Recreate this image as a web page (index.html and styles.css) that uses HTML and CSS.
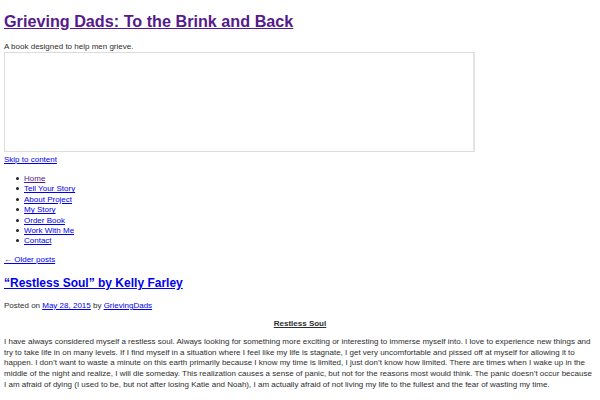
FILE: index.html
```html
<!DOCTYPE html>
<html lang="en">
<head>
<meta charset="utf-8">
<title>Grieving Dads: To the Brink and Back</title>
<link rel="stylesheet" href="styles.css">
</head>
<body>
<header class="site-header">
  <h1 class="site-title"><a class="visited" href="#">Grieving Dads: To the Brink and Back</a></h1>
  <p class="site-description">A book designed to help men grieve.</p>
  <div class="header-frame"></div>
  <a class="skip-link" href="#content">Skip to content</a>
  <ul class="menu">
    <li><a class="visited" href="#">Home</a></li>
    <li><a href="#">Tell Your Story</a></li>
    <li><a href="#">About Project</a></li>
    <li><a href="#">My Story</a></li>
    <li><a href="#">Order Book</a></li>
    <li><a href="#">Work With Me</a></li>
    <li><a href="#">Contact</a></li>
  </ul>
</header>
<main id="content" class="content">
  <div class="nav-above"><a href="#">&larr; Older posts</a></div>
  <article class="post">
    <h2 class="entry-title"><a href="#">&ldquo;Restless Soul&rdquo; by Kelly Farley</a></h2>
    <div class="entry-meta">Posted on <a href="#">May 28, 2015</a> by <a href="#">GrievingDads</a></div>
    <p class="entry-heading"><strong>Restless Soul</strong></p>
    <p class="entry-text">I have always considered myself a restless soul. Always looking for something more exciting or interesting to immerse myself into. I love to experience new things and try to take life in on many levels. If I find myself in a situation where I feel like my life is stagnate, I get very uncomfortable and pissed off at myself for allowing it to happen. I don&rsquo;t want to waste a minute on this earth primarily because I know my time is limited, I just don&rsquo;t know how limited. There are times when I wake up in the middle of the night and realize, I will die someday. This realization causes a sense of panic, but not for the reasons most would think. The panic doesn&rsquo;t occur because I am afraid of dying (I used to be, but not after losing Katie and Noah), I am actually afraid of not living my life to the fullest and the fear of wasting my time.</p>
    <p class="entry-text second">I live in the United States and, where I live, it is called the land of Freedom. Freedom! We are given so many opportunities to live the lives we want, to chase our dreams and to become whatever we want to be.</p>
  </article>
</main>
</body>
</html>
```

FILE: styles.css
```css
html, body {
  background: #ffffff;
}
body {
  margin: 0;
  padding: 0 4px;
  font-family: "Liberation Sans", Arial, sans-serif;
  font-size: 8px;
  line-height: 10px;
  color: #2e2e2e;
}
a {
  color: #0000ee;
  text-decoration: underline;
}
a.visited {
  color: #551a8b;
}
.site-title {
  margin: 12px 0 0;
  font-size: 16.2px;
  line-height: 19px;
  font-weight: bold;
}
.site-description {
  margin: 11px 0 0;
}
.header-frame {
  box-sizing: border-box;
  width: 471px;
  height: 100px;
  border: 1px solid #dcdcdc;
  border-right: 2px solid #e4e4e4;
  background: #ffffff;
}
.skip-link {
  display: block;
  margin-top: 3px;
  width: max-content;
}
.menu {
  margin: 9px 0 0;
  padding-left: 20px;
  line-height: 10.4px;
  list-style: none;
}
.menu li::before {
  content: "";
  display: inline-block;
  width: 3px;
  height: 3px;
  border-radius: 50%;
  background: #222222;
  margin: 0 5px 1px -8px;
  vertical-align: middle;
}
.nav-above {
  margin-top: 8px;
}
.entry-title {
  margin: 11px 0 0;
  font-size: 12px;
  line-height: 14px;
  font-weight: bold;
}
.entry-meta {
  margin-top: 11px;
}
.entry-heading {
  margin: 8px 0 0;
  text-align: center;
  text-decoration: underline;
}
.entry-text {
  margin: 8px 0 0;
  line-height: 10.8px;
}
.entry-text.second {
  margin-top: 7px;
}
```
